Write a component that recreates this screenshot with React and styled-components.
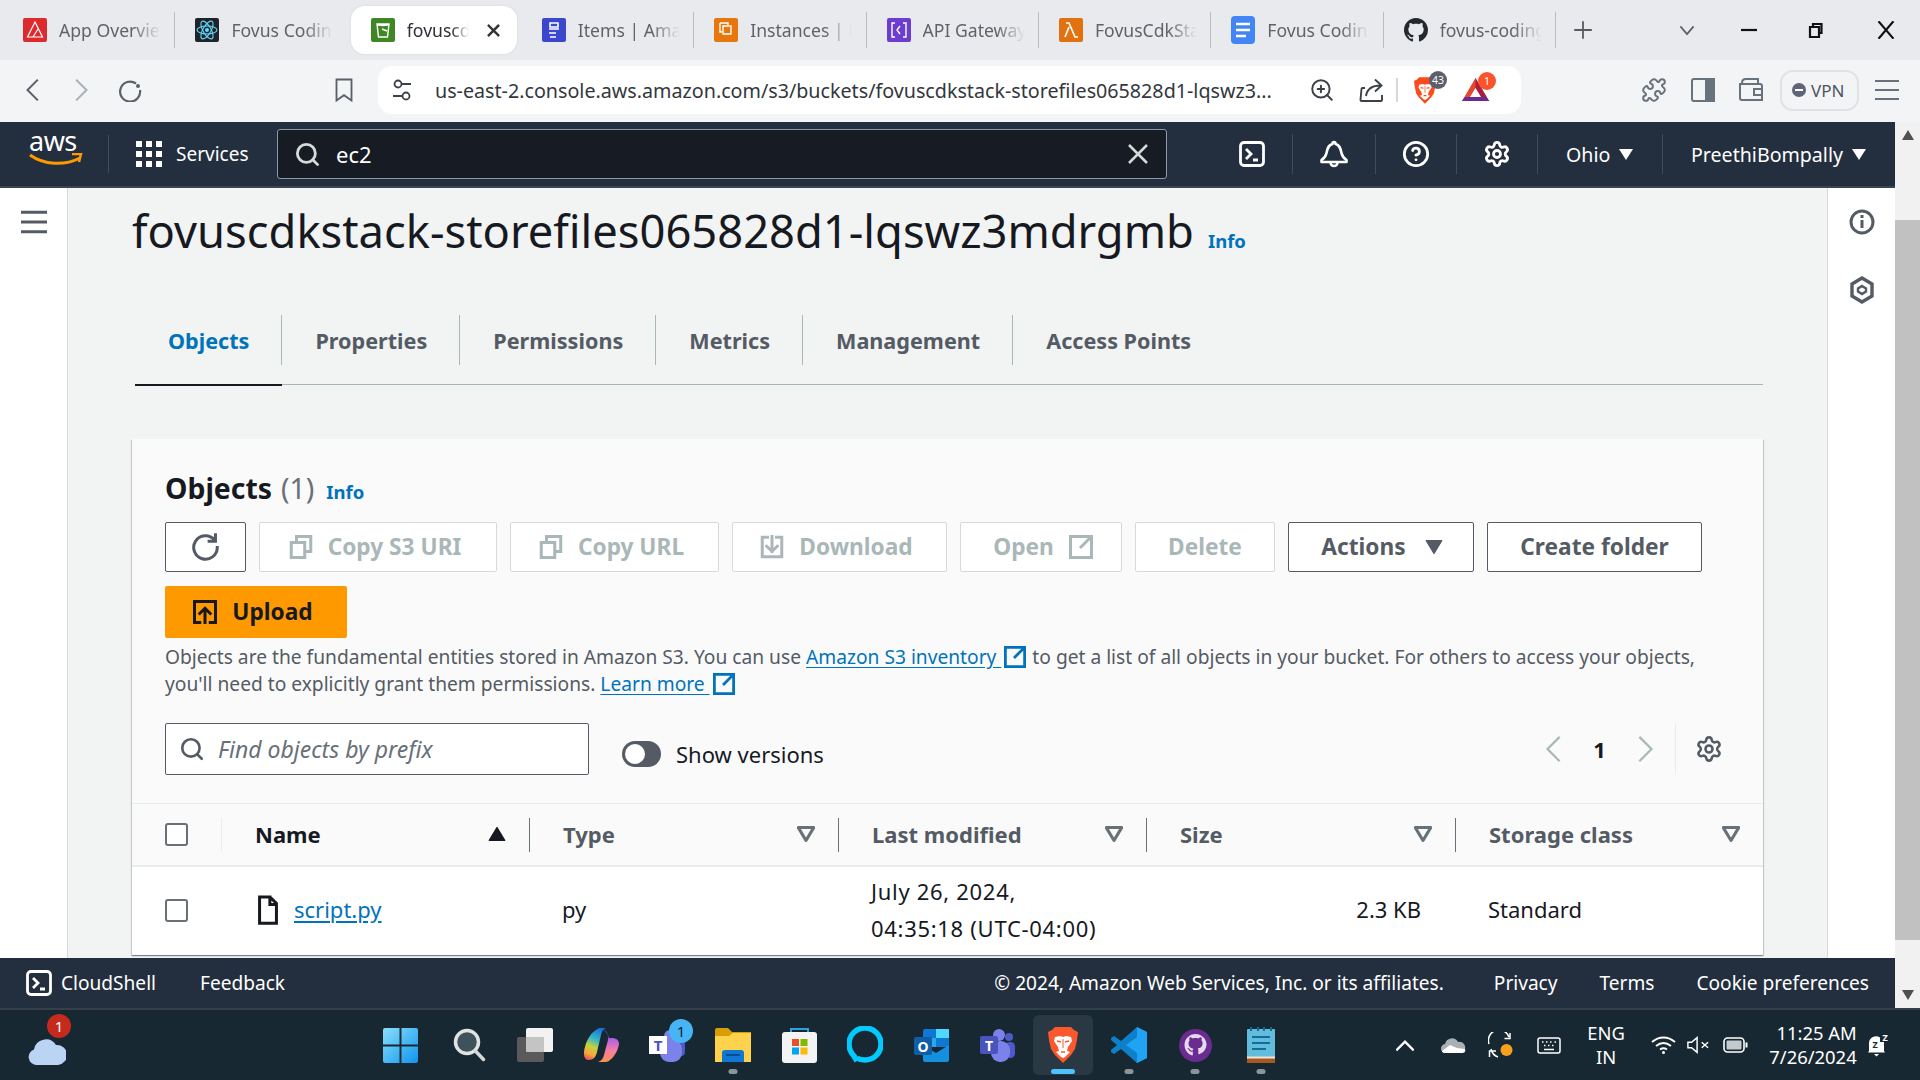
import React from "react";
import styled, { createGlobalStyle } from "styled-components";
import { Settings, CircleHelp, Search, ZoomIn, Puzzle } from "lucide-react";

const GlobalStyle = createGlobalStyle`
  html, body { margin: 0; padding: 0; overflow: hidden; }
  body { font-family: "Noto Sans", "Open Sans", sans-serif; background: #f2f3f3; }
  * { box-sizing: border-box; }
`;

const Screen = styled.div`
  width: 1920px;
  height: 1080px;
  display: flex;
  flex-direction: column;
  overflow: hidden;
`;

/* browser tabs */
const TabStrip = styled.div`
  height: 60px;
  background: #e9eaee;
  display: flex;
  align-items: center;
  padding-left: 3px;
  flex: none;
`;
const Tab = styled.div`
  width: ${p => (p.$active ? "166px" : "172.4px")};
  height: ${p => (p.$active ? "48px" : "36px")};
  margin: ${p => (p.$active ? "0 5px 0 3px" : "0")};
  display: flex;
  align-items: center;
  gap: 12px;
  padding-left: 20px;
  background: ${p => (p.$active ? "#fff" : "transparent")};
  border-radius: ${p => (p.$active ? "14px" : "0")};
  border-right: ${p => (p.$noline || p.$active ? "none" : "1px solid #b9bcc2")};
  box-shadow: ${p => (p.$active ? "0 0 3px rgba(0,0,0,.08)" : "none")};
  flex: none;
`;
const TabLabel = styled.span`
  font-size: 17.6px;
  color: ${p => (p.$active ? "#2b2f36" : "#5f6368")};
  white-space: nowrap;
  overflow: hidden;
  width: ${p => (p.$active ? "62px" : "102px")};
  -webkit-mask-image: linear-gradient(to right, #000 72%, transparent 100%);
  mask-image: linear-gradient(to right, #000 72%, transparent 100%);
`;
const TabClose = styled.span`
  margin-left: 5px;
  display: flex;
`;
const NewTab = styled.div`
  margin-left: 18px;
  display: flex;
  color: #555a62;
`;
const WindowControls = styled.div`
  margin-left: auto;
  display: flex;
  align-items: center;
  color: #111;
`;
const WinBtn = styled.div`
  width: ${p => p.$w}px;
  display: flex;
  justify-content: center;
`;

/* address bar */
const Toolbar = styled.div`
  height: 62px;
  background: #f3f4f6;
  display: flex;
  align-items: center;
  padding-left: 22px;
  flex: none;
  padding-bottom: 2px;
`;
const NavIcon = styled.div`
  width: ${p => p.$w || 47}px;
  margin-left: ${p => p.$ml || 0}px;
  flex: none;
  display: flex;
  color: ${p => p.$color || "#67727c"};
`;
const UrlPill = styled.div`
  margin-left: 22px;
  flex: none;
  width: 1143px;
  height: 48px;
  background: #fff;
  border-radius: 14px;
  display: flex;
  align-items: center;
  padding-left: 14px;
  color: #3c4048;
`;
const UrlText = styled.span`
  margin-left: 23px;
  font-size: 19.7px;
  width: 840px;
  white-space: nowrap;
  color: #33373d;
`;
const PillIcon = styled.div`
  display: flex;
  margin-left: ${p => p.$ml || 0}px;
  position: relative;
`;
const PillSep = styled.div`
  width: 2px;
  height: 24px;
  background: #d6d8dc;
  margin-left: 13px;
`;
const CountBadge = styled.span`
  position: absolute;
  top: -6px;
  right: ${p => p.$r}px;
  width: 18px;
  height: 18px;
  border-radius: 50%;
  background: ${p => p.$bg};
  color: #fff;
  font-size: 10.5px;
  line-height: 18px;
  text-align: center;
`;
const VpnPill = styled.div`
  margin-left: 7px;
  flex: none;
  width: 79px;
  height: 41px;
  border: 2px solid #dfe2e6;
  border-radius: 13px;
  display: flex;
  align-items: center;
  gap: 5px;
  padding-left: 10px;
  font-size: 17px;
  color: #4f5560;
`;
const VpnDot = styled.span`
  width: 14px;
  height: 14px;
  border-radius: 50%;
  background: #5e6479;
  position: relative;
  &::after {
    content: "";
    position: absolute;
    left: 3px;
    top: 6px;
    width: 8px;
    height: 2px;
    background: #fff;
  }
`;

/* console frame */
const Frame = styled.div`
  flex: 1;
  min-height: 0;
  display: flex;
`;
const Console = styled.div`
  flex: 1;
  min-width: 0;
  display: flex;
  flex-direction: column;
`;
const ScrollTrack = styled.div`
  width: 25px;
  background: #f1f1f1;
  display: flex;
  flex-direction: column;
  align-items: center;
  padding: 8px 0;
`;
const ScrollThumb = styled.div`
  width: 100%;
  height: 720px;
  margin: 80px 0 50px;
  background: #c1c1c1;
`;
const ScrollArrow = styled.span`
  width: 0;
  height: 0;
  border-left: 6px solid transparent;
  border-right: 6px solid transparent;
  ${p => (p.$up ? "border-bottom: 10px solid #505050;" : "border-top: 10px solid #505050;")}
`;

const Header = styled.div`
  height: 66px;
  background: #232f3e;
  border-bottom: 2px solid #3a4553;
  color: #fff;
  display: flex;
  align-items: center;
  flex: none;
`;
const LogoBox = styled.div`
  width: 109px;
  height: 38px;
  border-right: 1px solid #414d5c;
  padding-left: 29px;
  line-height: 1;
`;
const LogoText = styled.div`
  font-size: 27px;
  line-height: 24px;
  margin-top: -6px;
  letter-spacing: -0.5px;
`;
const ServicesBtn = styled.div`
  display: flex;
  align-items: center;
  gap: 14px;
  padding-left: 27px;
  width: 168px;
  font-size: 19px;
`;
const SearchBox = styled.div`
  width: 890px;
  height: 50px;
  background: #161b24;
  border: 1px solid #8d99a8;
  border-radius: 3px;
  display: flex;
  align-items: center;
  padding: 0 18px 0 16px;
  font-size: 22px;
`;
const SearchValue = styled.span`
  margin-left: 15px;
  flex: 1;
`;
const HeaderIcon = styled.div`
  display: flex;
  align-items: center;
  justify-content: center;
  height: 40px;
  width: ${p => p.$w}px;
  padding-left: ${p => p.$pl || 0}px;
  border-right: 1px solid #414d5c;
`;
const HeaderMenu = styled.div`
  display: flex;
  align-items: center;
  gap: 9px;
  height: 40px;
  font-size: 19.6px;
  padding-left: 28px;
  width: ${p => p.$w}px;
  white-space: nowrap;
  border-right: ${p => (p.$line ? "1px solid #414d5c" : "none")};
`;
const WhiteCaret = styled.span`
  width: 0;
  height: 0;
  border-left: 7px solid transparent;
  border-right: 7px solid transparent;
  border-top: 11px solid #fff;
`;

const Body = styled.div`
  flex: 1;
  min-height: 0;
  display: flex;
  overflow: hidden;
`;
const SideRail = styled.div`
  flex: none;
  width: ${p => p.$w}px;
  background: #fff;
  border-${p => p.$side}: 1px solid #d5dbdb;
  display: flex;
  flex-direction: column;
  align-items: center;
  padding-top: 21px;
  gap: 41px;
  color: #545b64;
`;
const Main = styled.div`
  flex: 1;
  min-width: 0;
  padding: 17px 64px 0;
  background: #f2f3f3;
`;
const TitleRow = styled.div`
  display: flex;
  align-items: baseline;
  gap: 14px;
  height: 52px;
`;
const Title = styled.h1`
  margin: 0;
  font-size: 45.3px;
  font-weight: 400;
  line-height: 52px;
  color: #16191f;
  white-space: nowrap;
`;
const InfoLink = styled.a`
  color: #0073bb;
  font-weight: 700;
  font-size: 18.5px;
`;
const TabsRow = styled.div`
  margin: 58px 0 0 3px;
  height: 70px;
  border-bottom: 1px solid #aab7b8;
  display: flex;
  align-items: flex-start;
`;
const ConsoleTab = styled.div`
  height: 70px;
  display: flex;
  align-items: center;
  position: relative;
  padding: 0 33px 20px;
  font-size: 21.6px;
  font-weight: 700;
  color: ${p => (p.$active ? "#0073bb" : "#545b64")};
  &::after {
    content: "";
    display: ${p => (p.$active ? "block" : "none")};
    position: absolute;
    left: 0;
    right: 0;
    bottom: -1px;
    height: 2px;
    background: #16191f;
  }
  &::before {
    content: "";
    display: ${p => (p.$last ? "none" : "block")};
    position: absolute;
    right: 0;
    top: 0;
    height: 50px;
    width: 1px;
    background: #aab7b8;
  }
`;
const Card = styled.div`
  margin-top: 54px;
  height: 516px;
  background: #fafafa;
  box-shadow: 0 1px 1px 0 rgba(0, 28, 36, 0.3), 1px 1px 1px 0 rgba(0, 28, 36, 0.15), -1px 1px 1px 0 rgba(0, 28, 36, 0.15);
`;
const CardHead = styled.div`
  padding: 31px 32px 0 33px;
  height: 364px;
`;
const Heading = styled.div`
  display: flex;
  align-items: baseline;
  gap: 12px;
  height: 37px;
  font-size: 28.4px;
  line-height: 37px;
  font-weight: 700;
  color: #16191f;
`;
const Count = styled.span`
  font-weight: 400;
  color: #687078;
  margin-left: -3px;
`;
const ButtonBar = styled.div`
  margin-top: 15px;
  display: flex;
  flex-wrap: wrap;
  gap: 14px 13px;
`;
const Btn = styled.div`
  width: ${p => p.$w}px;
  height: 50px;
  display: flex;
  align-items: center;
  justify-content: center;
  gap: 15px;
  padding-right: ${p => p.$pr || 0}px;
  padding-left: ${p => p.$pl || 0}px;
  font-size: 22.7px;
  line-height: 30px;
  font-weight: 700;
  white-space: nowrap;
  border-radius: 2px;
  background: #fff;
  border: 1px solid ${p => (p.$off ? "#d5dbdb" : "#545b64")};
  color: ${p => (p.$off ? "#aab7b8" : "#545b64")};
`;
const PrimaryBtn = styled(Btn)`
  height: 52px;
  background: #ff9900;
  border-color: #ff9900;
  color: #16191f;
`;
const CaretGap = styled.span`
  display: flex;
  margin-left: 4px;
`;
const Lead = styled.p`
  margin: 5px 0 0;
  font-size: 19.2px;
  line-height: 27px;
  color: #545b64;
`;
const LeadLink = styled.a`
  color: #0073bb;
  text-decoration: underline;
  text-underline-offset: 3px;
`;
const IconInline = styled.span`
  display: inline-block;
  height: 16px;
  line-height: 0;
  vertical-align: -4px;
  margin: -8px 1px 0 3px;
`;
const FilterRow = styled.div`
  margin-top: 26px;
  display: flex;
  align-items: flex-start;
`;
const FilterInput = styled.div`
  width: 424px;
  height: 52px;
  background: #fff;
  border: 1px solid #545b64;
  border-radius: 2px;
  display: flex;
  align-items: center;
  gap: 13px;
  padding-left: 13px;
  color: #545b64;
`;
const Placeholder = styled.span`
  font-style: italic;
  font-size: 23px;
  color: #687078;
`;
const ToggleWrap = styled.div`
  margin: 18px 0 0 33px;
  display: flex;
  align-items: center;
  gap: 15px;
  font-size: 22px;
  line-height: 26px;
  color: #16191f;
`;
const ToggleTrack = styled.span`
  width: 39px;
  height: 26px;
  border-radius: 13px;
  background: #545b64;
  position: relative;
  &::after {
    content: "";
    position: absolute;
    left: 3px;
    top: 3px;
    width: 20px;
    height: 20px;
    border-radius: 50%;
    background: #fff;
  }
`;
const Pager = styled.div`
  margin-left: auto;
  display: flex;
  align-items: center;
  height: 52px;
  margin-right: 8px;
  color: #aab7b8;
`;
const PageNum = styled.span`
  font-size: 22px;
  font-weight: 700;
  color: #16191f;
  width: 65px;
  text-align: center;
`;
const PagerGear = styled.div`
  margin-left: 17px;
  padding-left: 19px;
  height: 52px;
  border-left: 1px solid #eaeded;
  display: flex;
  align-items: center;
  color: #545b64;
`;

const COLUMNS = "89px 308px 309px 308px 309px 1fr";
const TableHead = styled.div`
  display: grid;
  grid-template-columns: ${COLUMNS};
  height: 64px;
  border-top: 1px solid #eaeded;
  border-bottom: 2px solid #eaeded;
  align-items: center;
`;
const HeadCell = styled.div`
  height: 34px;
  padding: 0 23px 2px 33px;
  border-left: ${p => (p.$first ? "1px solid #eaeded" : "1px solid #687078")};
  display: flex;
  align-items: center;
  justify-content: space-between;
  font-size: 22px;
  font-weight: 700;
  color: ${p => (p.$sorted ? "#16191f" : "#545b64")};
`;
const CheckCell = styled.div`
  padding-left: 33px;
  display: flex;
  align-items: center;
`;
const CheckBox = styled.span`
  width: 23px;
  height: 23px;
  background: #fff;
  border: 2px solid #687078;
  border-radius: 3px;
`;
const TableRow = styled.div`
  display: grid;
  grid-template-columns: ${COLUMNS};
  height: 87px;
  background: #fff;
  align-items: center;
  font-size: 22px;
  color: #16191f;
`;
const Cell = styled.div`
  padding-left: ${p => p.$pl ?? 33}px;
  padding-right: ${p => p.$pr || 0}px;
  padding-bottom: 2px;
  text-align: ${p => p.$align || "left"};
  line-height: 37px;
  letter-spacing: ${p => p.$spaced ? "0.7px" : "0"};
  display: ${p => (p.$flex ? "flex" : "block")};
  align-items: center;
  gap: 11px;
`;
const FileLink = styled.a`
  color: #0073bb;
  text-decoration: underline;
  text-underline-offset: 3px;
`;

const Footer = styled.div`
  height: 50px;
  background: #232f3e;
  color: #fff;
  display: flex;
  align-items: center;
  padding: 0 26px;
  font-size: 19.1px;
  flex: none;
`;
const FootLink = styled.span`
  margin-left: ${p => p.$ml || 0}px;
  display: flex;
  align-items: center;
  gap: 9px;
  white-space: nowrap;
`;
const FootSpacer = styled.div`
  flex: 1;
`;

/* windows taskbar */
const Taskbar = styled.div`
  flex: none;
  height: 72px;
  border-top: 2px solid #343f47;
  background: #172833;
  color: #fff;
  display: flex;
  align-items: center;
`;
const WeatherSlot = styled.div`
  width: 370px;
  padding: 10px 0 0 28px;
  position: relative;
  display: flex;
`;
const RedBadge = styled.span`
  position: absolute;
  left: 47px;
  top: -11px;
  width: 24px;
  height: 24px;
  border-radius: 50%;
  background: #c42b1c;
  font-size: 15px;
  line-height: 24px;
  text-align: center;
`;
const Dock = styled.div`
  display: flex;
  width: 925px;
`;
const DockSlot = styled.div`
  width: 66px;
  height: 60px;
  padding-right: ${p => p.$nudge || 0}px;
  display: flex;
  align-items: center;
  justify-content: center;
  position: relative;
  &::before {
    content: "";
    display: ${p => (p.$active ? "block" : "none")};
    position: absolute;
    left: 3px;
    right: 3px;
    top: 0;
    bottom: 0;
    border-radius: 6px;
    background: rgba(255, 255, 255, 0.08);
  }
  &::after {
    content: "";
    display: ${p => (p.$dot || p.$active ? "block" : "none")};
    position: absolute;
    left: 50%;
    bottom: 1px;
    transform: translateX(-50%);
    width: ${p => (p.$active ? "24px" : "9px")};
    height: 5px;
    border-radius: 3px;
    background: ${p => (p.$active ? "#4cc2ff" : "#8c9499")};
  }
`;
const BlueBadge = styled.span`
  position: absolute;
  right: 7px;
  top: 4px;
  width: 24px;
  height: 24px;
  border-radius: 50%;
  background: #47b5f5;
  color: #10222c;
  font-size: 15px;
  line-height: 24px;
  text-align: center;
`;
const Tray = styled.div`
  flex: 1;
  display: flex;
  align-items: center;
  padding-left: 86px;
`;
const TraySlot = styled.div`
  width: ${p => p.$w}px;
  display: flex;
  justify-content: center;
  text-align: ${p => p.$align || "center"};
  font-size: 18.4px;
  line-height: 24px;
  white-space: pre;
`;

const Caret = ({ size = 14, color = "currentColor", up, outline }) => (
  <svg width={size} height={size} viewBox="0 0 14 14">
    <path
      d={up ? "M7 2 L13 12 L1 12 Z" : "M1 2 L13 2 L7 12 Z"}
      fill={outline ? "none" : color}
      stroke={color}
      strokeWidth={outline ? 2.4 : 1}
      strokeLinejoin="round"
    />
  </svg>
);

const Line = ({ d, size = 24, width = 2, color = "currentColor", view = 16 }) => (
  <svg width={size} height={size} viewBox={`0 0 ${view} ${view}`} fill="none" stroke={color} strokeWidth={width * view / size} strokeLinecap="square" strokeLinejoin="miter">
    <path d={d} />
  </svg>
);

const REFRESH = "M14.500 8a6.500 6.500 0 1 1-1.600-4.300M13.500 1v3.500H10";
const COPY = "M1.500 5h9v10h-9zM5 5V1h9.500v10h-4";
const DOWNLOAD = "M11 1.500h3.500v13h-13v-13H5M4.500 7.500 8 11l3.500-3.500M8 1v10";
const EXTERNAL = "M15 8V1H8M15 1 8 8M6 1H1v14h14v-5";
const UPLOAD = "M4.500 15H1V1h14v14h-3.500M4.500 9 8 5.500 11.500 9M8 6v9";
const FILE = "M9 1H3.500v14h9V4.500zM9 1v4h3.500";

const Terminal = ({ size = 26 }) => (
  <svg width={size} height={size} viewBox="0 0 26 26" fill="none" stroke="#fff" strokeWidth="2.800">
    <rect x="1.500" y="1.500" width="23" height="23" rx="3.500" />
    <path d="M7 8l5 5-5 5M14 19h5" />
  </svg>
);

const Square = ({ bg, children }) => (
  <svg width="24" height="24" viewBox="0 0 24 24">
    <rect width="24" height="24" rx={2} fill={bg} />
    {children}
  </svg>
);

const favicons = {
  amplify: (
    <Square bg="#dd2a2f">
      <path d="M12 4l7.500 15H4.500zM10 19l5-8M6 19h9" fill="none" stroke="#fff" strokeWidth="1.200" />
    </Square>
  ),
  react: (
    <Square bg="#20232a">
      <g fill="none" stroke="#61dafb" strokeWidth="1.100">
        <ellipse cx="12" cy="12" rx="10" ry="4" />
        <ellipse cx="12" cy="12" rx="10" ry="4" transform="rotate(60 12 12)" />
        <ellipse cx="12" cy="12" rx="10" ry="4" transform="rotate(120 12 12)" />
      </g>
      <circle cx="12" cy="12" r="2" fill="#61dafb" />
    </Square>
  ),
  s3: (
    <Square bg="#3f8624">
      <path d="M6 6h12l-1.500 13h-9zM6 6c2 2 10 2 12 0M11 11l5 2" fill="none" stroke="#fff" strokeWidth="1.400" />
    </Square>
  ),
  dynamo: (
    <Square bg="#3b48cc">
      <path d="M8 5h8v4H8zM7 11h10M7 15h7M8 19h6" fill="none" stroke="#fff" strokeWidth="1.600" />
    </Square>
  ),
  ec2: (
    <Square bg="#e7760d">
      <path d="M9 8h8v8H9zM6 5h8v2M6 5v9h2" fill="none" stroke="#fff" strokeWidth="1.400" />
    </Square>
  ),
  api: (
    <Square bg="#6b3ed1">
      <path d="M8 5H5v14h3M16 5h3v14h-3M13 8l-3 4 3 4" fill="none" stroke="#fff" strokeWidth="1.400" />
    </Square>
  ),
  lambda: (
    <Square bg="#e2710f">
      <path d="M7 5h3l6 14h3M10 9l-4 10" fill="none" stroke="#fff" strokeWidth="1.700" />
    </Square>
  ),
  docs: (
    <svg width="24" height="28" viewBox="0 0 24 28">
      <rect width="24" height="28" rx="4" fill="#4285f4" />
      <path d="M5 8h14M5 14h14M5 20h10" stroke="#fff" strokeWidth="2.600" />
    </svg>
  ),
  github: (
    <svg width="24" height="24" viewBox="0 0 16 16" fill="#24292f">
      <path d="M8 0C3.580 0 0 3.580 0 8c0 3.540 2.290 6.530 5.470 7.590.4.070.55-.17.55-.38 0-.19-.01-.82-.01-1.490-2.010.37-2.530-.49-2.690-.94-.09-.23-.48-.94-.82-1.130-.28-.15-.68-.52-.01-.53.63-.01 1.080.58 1.230.82.72 1.210 1.870.87 2.330.66.070-.52.280-.87.510-1.070-1.780-.2-3.640-.89-3.640-3.950 0-.87.31-1.590.82-2.150-.08-.2-.36-1.020.08-2.120 0 0 .67-.21 2.200.82.64-.18 1.320-.27 2-.27s1.360.09 2 .27c1.530-1.040 2.200-.82 2.200-.82.44 1.100.16 1.920.08 2.120.51.56.82 1.270.82 2.150 0 3.070-1.870 3.750-3.650 3.950.29.25.54.73.54 1.480 0 1.070-.01 1.930-.01 2.200 0 .21.15.46.55.38A8.010 8.010 0 0 0 16 8c0-4.420-3.580-8-8-8z" />
    </svg>
  ),
};

const tabs = [
  { key: "amplify", title: "App Overview" },
  { key: "react", title: "Fovus Coding" },
  { key: "s3", title: "fovuscdkstack", active: true },
  { key: "dynamo", title: "Items | Amazon" },
  { key: "ec2", title: "Instances | EC2" },
  { key: "api", title: "API Gateway" },
  { key: "lambda", title: "FovusCdkStack" },
  { key: "docs", title: "Fovus Coding" },
  { key: "github", title: "fovus-coding" },
];

const BraveLion = ({ w = 30, h = 36 }) => (
  <svg width={w} height={h} viewBox="0 0 30 36">
    <path d="M7 0h16l3 3 4 2-1 8-2 9-4 6-8 8-8-8-4-6-2-9-1-8 4-2z" fill="#fb4a1c" />
    <path d="M7 10l5-1 3 1 3-1 5 1 1 4-4 6-1 4 3 1-5 5-2 1-2-1-5-5 3-1-1-4-4-6z" fill="#fff" />
    <path d="M9 14l4 1M21 14l-4 1M13 25h4" stroke="#fb4a1c" strokeWidth="1.600" fill="none" />
    <path d="M15 12v9" stroke="#fb4a1c" strokeWidth="1" />
  </svg>
);

const dockIcons = [
  {
    key: "start",
    nudge: 6,
    node: (
      <svg width="35" height="35" viewBox="0 0 35 35">
        <defs>
          <linearGradient id="win" x1="0" y1="0" x2="1" y2="1">
            <stop offset="0" stopColor="#8be0f9" />
            <stop offset="1" stopColor="#0f94ee" />
          </linearGradient>
        </defs>
        <path d="M2 0h14.500v16.500H0V2a2 2 0 0 1 2-2zM18.500 0H33a2 2 0 0 1 2 2v14.500H18.500zM0 18.500h16.500V35H2a2 2 0 0 1-2-2zM18.500 18.500H35V33a2 2 0 0 1-2 2H18.500z" fill="url(#win)" />
      </svg>
    ),
  },
  {
    key: "search",
    node: (
      <svg width="33" height="34" viewBox="0 0 33 34" fill="none">
        <circle cx="14" cy="14" r="11.500" fill="#3f525c" stroke="#dfe3e5" strokeWidth="3.500" />
        <path d="M22.500 23l8 8.500" stroke="#d3d7d9" strokeWidth="3.500" strokeLinecap="round" />
      </svg>
    ),
  },
  {
    key: "view",
    node: (
      <svg width="36" height="34" viewBox="0 0 36 34">
        <rect x="9" width="27" height="24" rx="2" fill="#f2f2f2" />
        <rect y="9" width="27" height="25" rx="2" fill="#5a5a5a" />
        <rect x="9" y="9" width="18" height="15" rx="1" fill="#c4c4c4" />
      </svg>
    ),
  },
  {
    key: "copilot",
    node: (
      <svg width="36" height="34" viewBox="0 0 36 34">
        <defs>
          <linearGradient id="cpA" x1="0.600" y1="0" x2="0.300" y2="1">
            <stop offset="0" stopColor="#1c74d8" />
            <stop offset="0.350" stopColor="#33b8c8" />
            <stop offset="0.600" stopColor="#c5d23a" />
            <stop offset="0.850" stopColor="#f4a83a" />
            <stop offset="1" stopColor="#ee5a5a" />
          </linearGradient>
          <linearGradient id="cpB" x1="0.500" y1="0" x2="0.500" y2="1">
            <stop offset="0" stopColor="#1b4fc4" />
            <stop offset="0.300" stopColor="#b65fe0" />
            <stop offset="0.650" stopColor="#f57fa0" />
            <stop offset="1" stopColor="#f7924f" />
          </linearGradient>
        </defs>
        <path d="M13 2c1-1 2-2 4-2h6c-3 1-4 3-5 7l-4 17c-1 5-4 8-8 8-3 0-5-2-5-6 0-2 0-4 1-7C4 11 8 5 13 2z" fill="url(#cpA)" />
        <path d="M20 2c3 0 4 2 5 5l1 3h3c4 0 7 2 7 6-1 6-4 12-9 16-2 2-4 2-6 2h-6c3-1 5-3 6-7l4-15c1-4-1-8-5-10z" fill="url(#cpB)" />
      </svg>
    ),
  },
  {
    key: "teams1",
    badge: "1",
    node: (
      <svg width="36" height="34" viewBox="0 0 36 34">
        <circle cx="21" cy="8" r="6" fill="#7b83eb" />
        <rect x="27" y="12" width="9" height="16" rx="4" fill="#5059c9" />
        <rect x="11" y="12" width="22" height="22" rx="9" fill="#7b83eb" />
        <rect y="8" width="18" height="18" fill="#fff" />
        <text x="9" y="22.500" fill="#4b53bc" fontSize="15" fontWeight="700" textAnchor="middle" fontFamily="Noto Sans">T</text>
      </svg>
    ),
  },
  {
    key: "files",
    dot: true,
    node: (
      <svg width="36" height="34" viewBox="0 0 36 34">
        <path d="M0 2a2 2 0 0 1 2-2h11l4 4h19v30H0z" fill="#d79e06" />
        <path d="M0 8h14l4-3h18v29H0z" fill="#ffd24d" />
        <path d="M7 34V25a3 3 0 0 1 3-3h16a3 3 0 0 1 3 3v9z" fill="#0f78d4" />
        <rect x="11" y="26" width="14" height="2" fill="#084d91" />
      </svg>
    ),
  },
  {
    key: "store",
    node: (
      <svg width="35" height="36" viewBox="0 0 35 36">
        <path d="M9 8V2h17v6" fill="none" stroke="#2aa4dc" strokeWidth="2" />
        <rect y="5" width="35" height="31" rx="3" fill="#f3f3f3" />
        <rect x="10" y="12" width="7" height="7" fill="#e84f2c" />
        <rect x="18.500" y="12" width="7" height="7" fill="#7fba00" />
        <rect x="10" y="20.500" width="7" height="7" fill="#00a4ef" />
        <rect x="18.500" y="20.500" width="7" height="7" fill="#ffb900" />
      </svg>
    ),
  },
  {
    key: "alexa",
    node: (
      <svg width="36" height="38" viewBox="0 0 36 38" fill="none">
        <path d="M10 35l-3-5C3 26 2 22 2 18 2 9 9 2 18 2s16 7 16 16-7 16-16 16c-2 0-5 0-8-2" stroke="#00caff" strokeWidth="5.500" />
      </svg>
    ),
  },
  {
    key: "outlook",
    node: (
      <svg width="35" height="33" viewBox="0 0 35 33">
        <rect x="9" y="0" width="26" height="18" rx="2" fill="#0f78d4" />
        <rect x="22" y="0" width="13" height="9" fill="#50d9ff" />
        <rect x="9" y="9" width="13" height="9" fill="#28a8ea" />
        <path d="M9 16l13 8 13-8v15a2 2 0 0 1-2 2H11a2 2 0 0 1-2-2z" fill="#1490df" />
        <rect y="8" width="18" height="18" rx="2" fill="#0f5ea8" />
        <text x="9" y="22.500" fill="#fff" fontSize="14" fontWeight="700" textAnchor="middle" fontFamily="Noto Sans">O</text>
      </svg>
    ),
  },
  {
    key: "teams2",
    node: (
      <svg width="35" height="33" viewBox="0 0 35 33">
        <circle cx="19" cy="6" r="6" fill="#7b83eb" />
        <circle cx="29" cy="8" r="4" fill="#5059c9" />
        <rect x="25" y="13" width="10" height="16" rx="4.500" fill="#5059c9" />
        <rect x="11" y="12" width="19" height="21" rx="9" fill="#7b83eb" />
        <rect y="7" width="18" height="18" rx="2" fill="#4b53bc" />
        <text x="9" y="21.500" fill="#fff" fontSize="14" fontWeight="700" textAnchor="middle" fontFamily="Noto Sans">T</text>
      </svg>
    ),
  },
  { key: "brave", active: true, node: <BraveLion /> },
  {
    key: "vscode",
    dot: true,
    node: (
      <svg width="36" height="36" viewBox="0 0 36 36">
        <path d="M26 0l10 5v26l-10 5-16-14-7 5-3-2v-2l6-5-6-5v-2l3-2 7 5z" fill="#0e7fc9" />
        <path d="M26 0l10 5v26l-10 5zM26 10L15 18l11 8z" fill="#1fa3f2" fillRule="evenodd" />
      </svg>
    ),
  },
  {
    key: "desktop",
    dot: true,
    node: (
      <svg width="33" height="33" viewBox="0 0 33 33">
        <circle cx="16.500" cy="16.500" r="16.500" fill="#6a2c91" />
        <g transform="translate(5.500 5) scale(1.380)">
          <path fill="#e6d9ee" d="M8 0C3.580 0 0 3.580 0 8c0 3.540 2.290 6.530 5.470 7.590.4.070.55-.17.55-.38v-2.500c-2 .4-2.500-.5-2.700-.9-.1-.2-.5-.9-.8-1.100-.3-.2-.7-.5 0-.5.600 0 1.100.6 1.200.8.700 1.200 1.900.9 2.300.7.100-.5.300-.9.500-1.100-1.800-.2-3.600-.9-3.600-4 0-.9.300-1.600.8-2.100-.1-.2-.4-1 .100-2.100 0 0 .7-.2 2.200.8.600-.2 1.300-.3 2-.3s1.400.1 2 .3c1.500-1 2.200-.8 2.200-.8.400 1.100.200 1.900.1 2.100.5.600.8 1.300.8 2.100 0 3.100-1.900 3.700-3.600 3.900.3.300.5.700.5 1.500v2.200c0 .2.100.500.600.400A8 8 0 0 0 16 8c0-4.420-3.580-8-8-8z" />
        </g>
      </svg>
    ),
  },
  {
    key: "notepad",
    dot: true,
    node: (
      <svg width="28" height="36" viewBox="0 0 28 36">
        <rect y="2" width="28" height="34" rx="1" fill="#63bcdc" />
        <rect y="31" width="28" height="5" fill="#a8581e" />
        <rect y="29.500" width="28" height="2" fill="#f0e6d2" />
        <path d="M4 0v4M11 0v4M17 0v4M24 0v4" stroke="#0d6e9e" strokeWidth="2" />
        <path d="M5 10h18M5 16h18M5 22h14" stroke="#0d6e9e" strokeWidth="2" />
      </svg>
    ),
  },
];

const buttons = [
  { label: "Copy S3 URI", w: 238, icon: COPY },
  { label: "Copy URL", w: 209, icon: COPY },
  { label: "Download", w: 215, icon: DOWNLOAD },
];

const headCols = ["Type", "Last modified", "Size", "Storage class"];

export default function App() {
  return (
    <Screen>
      <GlobalStyle />
      <TabStrip>
        {tabs.map((t, i) => (
          <Tab key={t.key} $active={t.active} $noline={tabs[i + 1]?.active}>
            {favicons[t.key]}
            <TabLabel $active={t.active}>{t.title}</TabLabel>
            {t.active && (
              <TabClose>
                <Line d="M3 3l10 10M13 3L3 13" size={15} width={2.400} color="#333" />
              </TabClose>
            )}
          </Tab>
        ))}
        <NewTab>
          <Line d="M8 1v14M1 8h14" size={18} width={1.800} />
        </NewTab>
        <WindowControls>
          <WinBtn $w={62}>
            <Line d="M2 5l6 7 6-7" size={16} width={1.800} color="#5b6069" />
          </WinBtn>
          <WinBtn $w={62}>
            <Line d="M1 8h14" size={16} width={2.200} />
          </WinBtn>
          <WinBtn $w={72}>
            <Line d="M2 5h9v10H2zM5 5V2h8.500v9H11" size={16} width={2.200} />
          </WinBtn>
          <WinBtn $w={68}>
            <Line d="M2 1l12 14M14 1L2 15" size={18} width={2.200} />
          </WinBtn>
        </WindowControls>
      </TabStrip>

      <Toolbar>
        <NavIcon $w={48} $color="#5b6069">
          <Line d="M11 1L4 8l7 7" size={22} width={2} />
        </NavIcon>
        <NavIcon $w={48} $color="#aab0b7">
          <Line d="M5 1l7 7-7 7" size={22} width={2} />
        </NavIcon>
        <NavIcon $w={214} $color="#5b6069">
          <svg width="24" height="24" viewBox="0 0 24 24" fill="none" stroke="#5b6069" strokeWidth="2.200">
            <path d="M18 5.500A10 10 0 1 0 22 12" />
            <circle cx="20" cy="8" r="2" fill="#5b6069" stroke="none" />
          </svg>
        </NavIcon>
        <NavIcon $w={24} $color="#5b6069">
          <Line d="M3 1h10v14l-5-3.500L3 15z" size={26} width={2} />
        </NavIcon>
        <UrlPill>
          <svg width="20" height="26" viewBox="0 0 20 26" fill="none" stroke="#3c4048" strokeWidth="1.800">
            <circle cx="6" cy="7" r="3.500" />
            <path d="M10 7h9M1 19h9" />
            <circle cx="14" cy="19" r="3.500" />
          </svg>
          <UrlText>us-east-2.console.aws.amazon.com/s3/buckets/fovuscdkstack-storefiles065828d1-lqswz3...</UrlText>
          <PillIcon $ml={34}>
            <ZoomIn size={26} strokeWidth={1.800} />
          </PillIcon>
          <PillIcon $ml={24}>
            <svg width="24" height="24" viewBox="0 0 24 24" fill="none" stroke="#3c4048" strokeWidth="1.900">
              <path d="M6 10H3.500a1 1 0 0 0-1 1l-1 11a1 1 0 0 0 1 1H22a1 1 0 0 0 1-1v-5" />
              <path d="M7 18C8 11 13 7.500 22 7.500" />
              <path d="M16 1.500l6.500 6-6.500 6" />
            </svg>
          </PillIcon>
          <PillSep />
          <PillIcon $ml={16}>
            <BraveLion w={22} h={27} />
            <CountBadge $r={-11} $bg="#5c5f6c">43</CountBadge>
          </PillIcon>
          <PillIcon $ml={26}>
            <svg width="27" height="24" viewBox="0 0 27 24">
              <path d="M13.500 0L27 23H0z" fill="#e8452c" />
              <path d="M13.500 0L27 23H20L13.500 10z" fill="#a8203e" />
              <path d="M0 23l3-4h21l3 4z" fill="#6a2c91" />
              <path d="M13.500 10l5.500 9H8z" fill="#fff" />
            </svg>
            <CountBadge $r={-7} $bg="#fb542b">1</CountBadge>
          </PillIcon>
        </UrlPill>
        <NavIcon $w={50} $ml={120}>
          <Puzzle size={26} strokeWidth={1.800} />
        </NavIcon>
        <NavIcon $w={48}>
          <svg width="24" height="24" viewBox="0 0 24 24" fill="none" stroke="#67727c" strokeWidth="2">
            <rect x="1" y="1" width="22" height="22" rx="2" />
            <rect x="15" y="1" width="8" height="22" fill="#67727c" />
          </svg>
        </NavIcon>
        <NavIcon $w={34}>
          <svg width="24" height="26" viewBox="0 0 24 26" fill="none" stroke="#67727c" strokeWidth="2">
            <path d="M3 6c0-2 1-4 4-4h12v4M1 7h20a2 2 0 0 1 2 2v14H3a2 2 0 0 1-2-2z" />
            <path d="M15 12h8v6h-8z" />
          </svg>
        </NavIcon>
        <VpnPill>
          <VpnDot />
          VPN
        </VpnPill>
        <NavIcon $w={24} $ml={16}>
          <Line d="M0 2h16M0 8h16M0 14h16" size={24} width={2} />
        </NavIcon>
      </Toolbar>

      <Frame>
        <Console>
          <Header>
            <LogoBox>
              <LogoText>aws</LogoText>
              <svg width="54" height="14" viewBox="0 0 54 14" fill="none" stroke="#ff9900" strokeWidth="3">
                <path d="M1 2c14 10 34 11 50 3" />
                <path d="M43 1l9 0-2 8" strokeWidth="2.500" />
              </svg>
            </LogoBox>
            <ServicesBtn>
              <svg width="26" height="26" viewBox="0 0 26 26" fill="#fff">
                {[0, 10, 20].flatMap(y =>
                  [0, 10, 20].map(x => <rect key={`${x}-${y}`} x={x} y={y} width="6" height="6" />)
                )}
              </svg>
              Services
            </ServicesBtn>
            <SearchBox>
              <Search size={27} strokeWidth={2.500} color="#d5dbdb" />
              <SearchValue>ec2</SearchValue>
              <svg width="20" height="20" viewBox="0 0 20 20" stroke="#d5dbdb" strokeWidth="2.500">
                <path d="M1 1l18 18M19 1L1 19" />
              </svg>
            </SearchBox>
            <HeaderIcon $w={126} $pl={44}>
              <Terminal />
            </HeaderIcon>
            <HeaderIcon $w={83}>
              <svg width="28" height="28" viewBox="0 0 28 28" fill="none" stroke="#fff" strokeWidth="2.600" strokeLinejoin="round">
                <path d="M14 2c-1 0-1.500 1-1.500 2C8.500 5 7.500 8 6.500 13c-.6 3-2 5-5 7v2h25v-2c-3-2-4.400-4-5-7-1-5-2-8-6-9 0-1-.5-2-1.500-2z" />
                <path d="M10.500 22.500a3.500 3.500 0 0 0 7 0" />
              </svg>
            </HeaderIcon>
            <HeaderIcon $w={81}>
              <CircleHelp size={28} strokeWidth={2.400} />
            </HeaderIcon>
            <HeaderIcon $w={81}>
              <Settings size={28} strokeWidth={2.400} />
            </HeaderIcon>
            <HeaderMenu $w={125} $line>
              Ohio
              <WhiteCaret />
            </HeaderMenu>
            <HeaderMenu $w={232}>
              PreethiBompally
              <WhiteCaret />
            </HeaderMenu>
          </Header>

          <Body>
            <SideRail $w={68} $side="right">
              <Line d="M0 2h16M0 8h16M0 14h16" size={26} width={3} color="#545b64" />
            </SideRail>
            <Main>
              <TitleRow>
                <Title>fovuscdkstack-storefiles065828d1-lqswz3mdrgmb</Title>
                <InfoLink>Info</InfoLink>
              </TitleRow>
              <TabsRow>
                <ConsoleTab $active>Objects</ConsoleTab>
                <ConsoleTab>Properties</ConsoleTab>
                <ConsoleTab>Permissions</ConsoleTab>
                <ConsoleTab>Metrics</ConsoleTab>
                <ConsoleTab>Management</ConsoleTab>
                <ConsoleTab $last>Access Points</ConsoleTab>
              </TabsRow>

              <Card>
                <CardHead>
                  <Heading>
                    <span>Objects</span>
                    <Count>(1)</Count>
                    <InfoLink>Info</InfoLink>
                  </Heading>
                  <ButtonBar>
                    <Btn $w={81}>
                      <Line d={REFRESH} size={29} width={3} />
                    </Btn>
                    {buttons.map(b => (
                      <Btn key={b.label} $w={b.w} $off $pr={6}>
                        <Line d={b.icon} size={24} width={3} />
                        {b.label}
                      </Btn>
                    ))}
                    <Btn $w={162} $off $pl={4}>
                      Open
                      <Line d={EXTERNAL} size={24} width={3} />
                    </Btn>
                    <Btn $w={140} $off>Delete</Btn>
                    <Btn $w={186} $pl={2}>
                      Actions
                      <CaretGap>
                        <Caret size={18} />
                      </CaretGap>
                    </Btn>
                    <Btn $w={215}>Create folder</Btn>
                    <PrimaryBtn $w={182} $pr={6}>
                      <Line d={UPLOAD} size={24} width={3} color="#16191f" />
                      Upload
                    </PrimaryBtn>
                  </ButtonBar>
                  <Lead>
                    Objects are the fundamental entities stored in Amazon S3. You can use{" "}
                    <LeadLink>Amazon S3 inventory </LeadLink>
                    <IconInline>
                      <Line d={EXTERNAL} size={22} width={2.800} color="#0073bb" />
                    </IconInline>{" "}
                    to get a list of all objects in your bucket. For others to access your objects, you'll need to explicitly grant them permissions.{" "}
                    <LeadLink>Learn more </LeadLink>
                    <IconInline>
                      <Line d={EXTERNAL} size={22} width={2.800} color="#0073bb" />
                    </IconInline>
                  </Lead>
                  <FilterRow>
                    <FilterInput>
                      <Search size={26} strokeWidth={2.400} />
                      <Placeholder>Find objects by prefix</Placeholder>
                    </FilterInput>
                    <ToggleWrap>
                      <ToggleTrack />
                      Show versions
                    </ToggleWrap>
                    <Pager>
                      <Line d="M11 1L4 8l7 7" size={26} width={2.200} />
                      <PageNum>1</PageNum>
                      <Line d="M5 1l7 7-7 7" size={26} width={2.200} />
                      <PagerGear>
                        <Settings size={28} strokeWidth={2.200} />
                      </PagerGear>
                    </Pager>
                  </FilterRow>
                </CardHead>

                <TableHead>
                  <CheckCell>
                    <CheckBox />
                  </CheckCell>
                  <HeadCell $first $sorted>
                    Name
                    <Caret up size={18} color="#16191f" />
                  </HeadCell>
                  {headCols.map(c => (
                    <HeadCell key={c}>
                      {c}
                      <Caret outline size={18} color="#687078" />
                    </HeadCell>
                  ))}
                </TableHead>
                <TableRow>
                  <CheckCell>
                    <CheckBox />
                  </CheckCell>
                  <Cell $flex $pl={32}>
                    <Line d={FILE} size={30} width={3} color="#16191f" />
                    <FileLink>script.py</FileLink>
                  </Cell>
                  <Cell>py</Cell>
                  <Cell $spaced>
                    July 26, 2024,
                    <br />
                    04:35:18 (UTC-04:00)
                  </Cell>
                  <Cell $align="right" $pr={34}>2.3 KB</Cell>
                  <Cell>Standard</Cell>
                </TableRow>
              </Card>
            </Main>
            <SideRail $w={68} $side="left">
              <svg width="26" height="26" viewBox="0 0 26 26" fill="none" stroke="#545b64" strokeWidth="3">
                <circle cx="13" cy="13" r="11" />
                <path d="M13 11v8M13 6v3" />
              </svg>
              <svg width="26" height="28" viewBox="0 0 26 28" fill="none" stroke="#545b64" strokeWidth="3.400">
                <path d="M13 2l10 6v12l-10 6-10-6V8z" />
                <path d="M13 10l4 2.500v3L13 18l-4-2.500v-3z" strokeWidth="2.400" />
              </svg>
            </SideRail>
          </Body>

          <Footer>
            <FootLink>
              <Terminal size={26} />
              CloudShell
            </FootLink>
            <FootLink $ml={44}>Feedback</FootLink>
            <FootSpacer />
            <FootLink>© 2024, Amazon Web Services, Inc. or its affiliates.</FootLink>
            <FootLink $ml={50}>Privacy</FootLink>
            <FootLink $ml={42}>Terms</FootLink>
            <FootLink $ml={42}>Cookie preferences</FootLink>
          </Footer>
        </Console>
        <ScrollTrack>
          <ScrollArrow $up />
          <ScrollThumb />
          <ScrollArrow />
        </ScrollTrack>
      </Frame>

      <Taskbar>
        <WeatherSlot>
          <svg width="38" height="30" viewBox="0 0 38 30">
            <path d="M8 30a8 8 0 0 1-2-15.500A12 12 0 0 1 28 10a9.500 9.500 0 0 1 2 20z" fill="#bcd4f4" />
          </svg>
          <RedBadge>1</RedBadge>
        </WeatherSlot>
        <Dock>
          {dockIcons.map(d => (
            <DockSlot key={d.key} $active={d.active} $dot={d.dot} $nudge={d.nudge}>
              {d.node}
              {d.badge && <BlueBadge>{d.badge}</BlueBadge>}
            </DockSlot>
          ))}
        </Dock>
        <Tray>
          <TraySlot $w={48}>
            <Line d="M1 12l7-7 7 7" size={18} width={2.400} color="#fff" />
          </TraySlot>
          <TraySlot $w={48}>
            <svg width="25" height="16" viewBox="0 0 25 16">
              <path d="M5 16a4.500 4.500 0 0 1-1-9A7 7 0 0 1 17 5a5.500 5.500 0 0 1 3 11z" fill="#a9b0b5" />
              <path d="M1 14l8-6 7 3 8 1c1 3-1 4-3 4H4c-2 0-3-1-3-2z" fill="#fff" />
            </svg>
          </TraySlot>
          <TraySlot $w={48}>
            <svg width="26" height="26" viewBox="0 0 26 26" fill="none" stroke="#fff" strokeWidth="1.500">
              <path d="M1 12A10.500 10.500 0 0 1 21 5M22 1v5.500h-5.500M3 17a11 11 0 0 0 7 8M1.500 25v-6H8" />
              <circle cx="18.500" cy="18" r="6" fill="#f7a01e" stroke="none" />
            </svg>
          </TraySlot>
          <TraySlot $w={48}>
            <svg width="24" height="17" viewBox="0 0 24 17" fill="none" stroke="#fff" strokeWidth="1.500">
              <rect x="1" y="1" width="22" height="15" rx="2" />
              <path d="M5 5h1.500M9 5h1.500M13 5h1.500M17.500 5h1.500M7 8.500h1.500M11 8.500h1.500M15 8.500h1.500M7 12.500h10" />
            </svg>
          </TraySlot>
          <TraySlot $w={66}>{"ENG\nIN"}</TraySlot>
          <TraySlot $w={48}>
            <svg width="25" height="18" viewBox="0 0 25 18" fill="none" stroke="#fff" strokeWidth="1.800">
              <path d="M1 6c7-6 16-6 23 0M5 10c5-4 10-4 15 0M9 13.500c2.500-1.800 4.500-1.800 7 0" />
              <circle cx="12.500" cy="16.500" r="1.500" fill="#fff" stroke="none" />
            </svg>
          </TraySlot>
          <TraySlot $w={22}>
            <svg width="24" height="18" viewBox="0 0 24 18" fill="none" stroke="#fff" strokeWidth="1.600">
              <path d="M1 6h4l6-5v16l-6-5H1zM16 6l7 6M23 6l-7 6" />
            </svg>
          </TraySlot>
          <TraySlot $w={52}>
            <svg width="25" height="16" viewBox="0 0 25 16" fill="none" stroke="#fff" strokeWidth="1.600">
              <rect x="1" y="1" width="20" height="14" rx="3.500" />
              <rect x="3.500" y="3.500" width="15" height="9" rx="1" fill="#c4c9cc" stroke="none" />
              <path d="M23.500 5.500v5" strokeWidth="2" />
            </svg>
          </TraySlot>
          <TraySlot $w={104} $align="right">{"11:25 AM\n7/26/2024"}</TraySlot>
          <TraySlot $w={26}>
            <svg width="24" height="24" viewBox="0 0 24 24" fill="#fff">
              <path d="M3 18v-8a7 7 0 0 1 11-5.500V9h4v9l1 1.500H2zM8 21h5l-2.500 2.500z" />
              <text x="9" y="15" fontSize="9" fill="#172833" textAnchor="middle" fontFamily="Noto Sans" fontWeight="700">Z</text>
              <text x="19" y="8" fontSize="9" fill="#fff" textAnchor="middle" fontFamily="Noto Sans" fontWeight="700">Z</text>
            </svg>
          </TraySlot>
        </Tray>
      </Taskbar>
    </Screen>
  );
}
